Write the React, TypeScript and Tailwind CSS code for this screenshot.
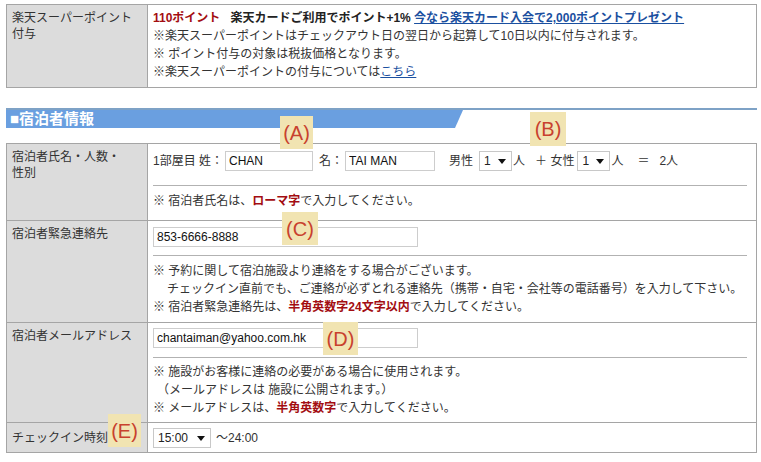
import type { ReactNode } from 'react';

const font = "font-['Liberation_Sans','Noto_Sans_CJK_JP',sans-serif]";

function Field({ value, className }: { value: string; className: string }) {
  return (
    <input
      readOnly
      value={value}
      className={`h-[20px] border border-[#cdcdcd] bg-white px-[3px] text-[12px] text-[#111] outline-none ${className}`}
    />
  );
}

function Pick({ value, className }: { value: string; className: string }) {
  return (
    <div className={`flex h-[20px] items-center justify-between border border-[#c8c8c8] bg-white pl-[4px] pr-[5px] text-[12px] text-[#222] ${className}`}>
      <span>{value}</span>
      <svg width="8" height="5" viewBox="0 0 8 5">
        <path d="M0 0h8L4 5z" fill="#111" />
      </svg>
    </div>
  );
}

function Row({ label, labelClass, first, children, bodyClass }: {
  label: ReactNode; labelClass: string; first?: boolean; children: ReactNode; bodyClass: string;
}) {
  return (
    <div className={`flex ${first ? '' : 'border-t border-[#a5a5a5]'}`}>
      <div className={`w-[141px] shrink-0 border-r border-[#a5a5a5] bg-[#dcdcdc] pl-[5px] text-[12px] leading-[16px] text-[#333] ${labelClass}`}>
        {label}
      </div>
      <div className={`flex-1 pl-[5px] pr-[9px] ${bodyClass}`}>{children}</div>
    </div>
  );
}

const Red = ({ children }: { children: ReactNode }) => <b className="font-bold text-[#a30d12]">{children}</b>;
const Rule = ({ className }: { className: string }) => <div className={`h-px bg-[#b2b2b2] ${className}`} />;

export default function App() {
  return (
    <div className={`relative min-h-[462px] w-[761px] bg-white pt-[4px] text-[12px] text-[#333] ${font}`}>
      {/* Point section */}
      <div className="ml-[6px] w-[751px] border border-[#a5a5a5]">
        <Row
          first
          label={<>楽天スーパーポイント<br />付与</>}
          labelClass="pt-[5px]"
          bodyClass="bg-white pt-[4px] pb-[6px] leading-[18px]"
        >
          <div>
            <b className="font-bold text-[#a30d12]">110ポイント</b>
            <b className="ml-[10px] font-bold text-[#222]">楽天カードご利用でポイント+1%</b>{' '}
            <a href="#" className="font-bold text-[#1b50a0] underline">今なら楽天カード入会で2,000ポイントプレゼント</a>
          </div>
          <div>※楽天スーパーポイントはチェックアウト日の翌日から起算して10日以内に付与されます。</div>
          <div>※ ポイント付与の対象は税抜価格となります。</div>
          <div>
            ※楽天スーパーポイントの付与については<a href="#" className="text-[#1b50a0] underline">こちら</a>
          </div>
        </Row>
      </div>

      {/* Section header */}
      <div className="mt-[20px] ml-[6px] flex h-[20px] w-[751px] border-t-2 border-[#7ea2c6]">
        <div className="w-[457px] bg-[#6a9fe0] pl-[4px] text-[15px] font-bold leading-[18px] text-white [clip-path:polygon(0_0,100%_0,calc(100%-8px)_100%,0_100%)]">
          ■宿泊者情報
        </div>
      </div>

      {/* Guest table */}
      <div className="mt-[15px] ml-[6px] w-[751px] border border-[#a5a5a5]">
        <Row
          first
          label={<>宿泊者氏名・人数・<br />性別</>}
          labelClass="pt-[5px]"
          bodyClass="pt-[7px] pb-[10px]"
        >
          <div className="flex h-[20px] items-center whitespace-nowrap">
            <span>1部屋目 姓：</span>
            <Field value="CHAN" className="ml-[2px] w-[88px]" />
            <span className="ml-[6px]">名：</span>
            <Field value="TAI MAN" className="ml-[2px] w-[90px]" />
            <span className="ml-[14px]">男性</span>
            <Pick value="1" className="ml-[6px] w-[33px]" />
            <span className="ml-[1px]">人</span>
            <span className="ml-[10px]">＋ 女性</span>
            <Pick value="1" className="ml-[3px] w-[33px]" />
            <span className="ml-[1px]">人</span>
            <span className="ml-[14px]">＝</span>
            <span className="ml-[10px]">2人</span>
          </div>
          <Rule className="mt-[14px]" />
          <div className="mt-[6px] leading-[18px]">
            ※ 宿泊者氏名は、<Red>ローマ字</Red>で入力してください。
          </div>
        </Row>

        <Row label="宿泊者緊急連絡先" labelClass="pt-[5px]" bodyClass="pt-[6px] pb-[6px]">
          <Field value="853-6666-8888" className="block w-[265px]" />
          <Rule className="mt-[8px]" />
          <div className="mt-[6px] leading-[18px]">
            <div>※ 予約に関して宿泊施設より連絡をする場合がございます。</div>
            <div className="pl-[14px]">チェックイン直前でも、ご連絡が必ずとれる連絡先（携帯・自宅・会社等の電話番号）を入力して下さい。</div>
            <div>※ 宿泊者緊急連絡先は、<Red>半角英数字24文字以内</Red>で入力してください。</div>
          </div>
        </Row>

        <Row label="宿泊者メールアドレス" labelClass="pt-[5px]" bodyClass="pt-[5px] pb-[5px]">
          <Field value="chantaiman@yahoo.com.hk" className="block w-[265px]" />
          <Rule className="mt-[9px]" />
          <div className="mt-[5px] leading-[18px]">
            <div>※ 施設がお客様に連絡の必要がある場合に使用されます。</div>
            <div className="pl-[4px]">（メールアドレスは 施設に公開されます。）</div>
            <div>※ メールアドレスは、<Red>半角英数字</Red>で入力してください。</div>
          </div>
        </Row>

        <Row label="チェックイン時刻" labelClass="flex items-center" bodyClass="pt-[5px] pb-[4px]">
          <div className="flex h-[20px] items-center">
            <Pick value="15:00" className="w-[58px]" />
            <span className="ml-[5px]">〜24:00</span>
          </div>
        </Row>
      </div>

      {/* Annotation badges */}
      <div className="absolute left-[280px] top-[116px] flex h-[33px] w-[33px] items-center justify-center bg-[#f1e4b2] text-[20px] text-[#c8412e]">(A)</div>
      <div className="absolute left-[530px] top-[112px] flex h-[34px] w-[36px] items-center justify-center bg-[#f1e4b2] text-[20px] text-[#c8412e]">(B)</div>
      <div className="absolute left-[282px] top-[212px] flex h-[33px] w-[36px] items-center justify-center bg-[#f1e4b2] text-[20px] text-[#c8412e]">(C)</div>
      <div className="absolute left-[323px] top-[322px] flex h-[33px] w-[35px] items-center justify-center bg-[#f1e4b2] text-[20px] text-[#c8412e]">(D)</div>
      <div className="absolute left-[108px] top-[414px] flex h-[33px] w-[33px] items-center justify-center bg-[#f1e4b2] text-[20px] text-[#c8412e]">(E)</div>
    </div>
  );
}
